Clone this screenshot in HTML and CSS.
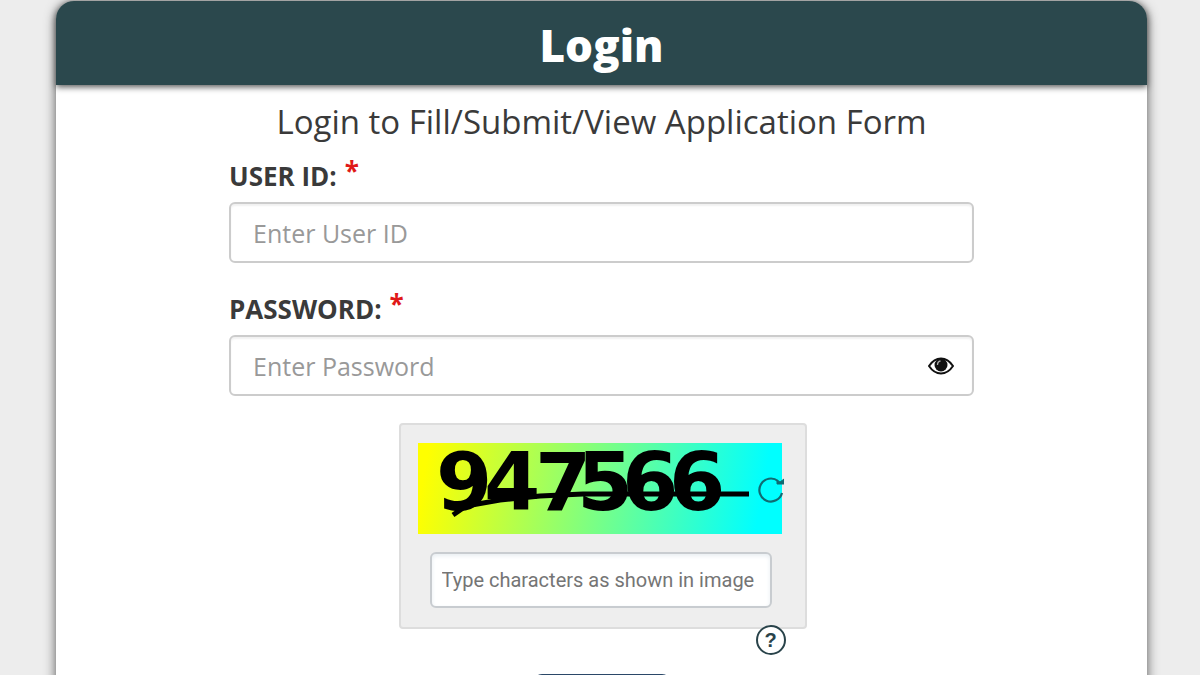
FILE: index.html
```html
<!DOCTYPE html>
<html lang="en">
<head>
<meta charset="utf-8">
<meta name="viewport" content="width=device-width, initial-scale=1">
<title>Login</title>
<link rel="stylesheet" href="styles.css">
</head>
<body>
<main class="card">
  <header class="card-header"><h1 class="title">Login</h1></header>
  <form class="form">
    <p class="subtitle">Login to Fill/Submit/View Application Form</p>
    <div class="field">
      <label class="label" for="user">USER ID: <span class="required">*</span></label>
      <input class="input" id="user" type="text" placeholder="Enter User ID">
    </div>
    <div class="field">
      <label class="label" for="password">PASSWORD: <span class="required">*</span></label>
      <div class="password">
        <input class="input" id="password" type="password" placeholder="Enter Password">
        <button class="icon-button eye" type="button" aria-label="Show password">
          <svg width="26" height="18" viewBox="0 0 26 18"><path d="M1 9Q6 1.500 13 1.500T25 9Q20 16.500 13 16.500T1 9Z" fill="#fff" stroke="#111" stroke-width="2"/><circle cx="13" cy="8" r="6.500" fill="#111"/><path d="M9.500 8Q9.500 4.500 12.500 4" fill="none" stroke="#aaa" stroke-width="1.300"/></svg>
        </button>
      </div>
    </div>
    <div class="captcha">
      <div class="captcha-image">
        <svg class="captcha-code" width="338" height="91" viewBox="0 0 338 91">
          <text class="digits" x="18 66 117 159 204 251" y="67">947566</text>
          <path d="M35 72L48 63L82 57L122 53L165 51H331" fill="none" stroke="#000" stroke-width="5"/>
        </svg>
        <button class="icon-button refresh" type="button" aria-label="Refresh image">
          <svg width="28" height="28" viewBox="0 0 28 28"><path d="M22 5A11.500 11.500 0 1 0 26 17" fill="none" stroke="#106b72" stroke-width="2.200"/><path d="M28 3V8H21V4L24 6Z" fill="#106b72" stroke="#106b72"/></svg>
        </button>
      </div>
      <input class="captcha-input" type="text" aria-label="Captcha" placeholder="Type characters as shown in image">
      <button class="icon-button help" type="button" aria-label="Help">?</button>
    </div>
    <button class="submit" type="submit" aria-label="Login"></button>
  </form>
</main>
</body>
</html>
```
FILE: styles.css
```css
* { box-sizing: border-box; }
html { scrollbar-width: none; }
body {
  margin: 0;
  padding: 1px 53px 0 56px;
  background: #ededed;
  color: #3a3a3a;
  font-family: "Open Sans", "Noto Sans", sans-serif;
}
.card {
  min-height: 100vh;
  background: #fff;
  border-radius: 18px;
  box-shadow: 0 2px 12px #555;
}
.card-header {
  padding: 14px 0 10px;
  border-radius: 18px 18px 0 0;
  background: #2b484d;
  box-shadow: 0 2px 6px #555;
  text-align: center;
}
.title {
  margin: 0;
  color: #fff;
  font-size: 44px;
  line-height: 60px;
  font-weight: 800;
}
.form {
  display: flex;
  flex-direction: column;
  align-items: center;
  width: 69%;
  max-width: 745px;
  margin: 0 auto;
  padding: 15px 0 24px;
}
.subtitle {
  margin: 0;
  font-size: 33px;
  line-height: 44px;
  text-align: center;
}
.field { width: 100%; margin-bottom: 14px; }
.label {
  display: flex;
  gap: 8px;
  padding-top: 14px;
  margin-bottom: 8px;
  font-size: 26px;
  line-height: 36px;
  font-weight: 700;
}
.required { color: #e01818; line-height: 26px; }
.input {
  display: block;
  width: 100%;
  height: 61px;
  padding: 0 22px;
  border: 2px solid #ccc;
  border-radius: 6px;
  background: #fff;
  box-shadow: inset 0 2px 2px #f1f1f1;
  font: 25px "Open Sans", sans-serif;
}
.input::placeholder { color: #999; }
.password { position: relative; }
.icon-button {
  display: flex;
  align-items: center;
  justify-content: center;
  padding: 0;
  border: 0;
  background: none;
}
.eye { position: absolute; right: 20px; top: 22px; }
.captcha {
  position: relative;
  width: 408px;
  margin: 13px 0 0 2px;
  padding: 18px 23px 19px 17px;
  border: 2px solid #ddd;
  border-radius: 4px;
  background: #eee;
}
.captcha-image {
  display: flex;
  align-items: center;
  height: 91px;
  margin-bottom: 18px;
  background: linear-gradient(100deg, #ff0 3%, #0ff 93%);
}
.captcha-code { flex: none; overflow: visible; }
.digits { font: bold 81px "DejaVu Sans", sans-serif; }
.refresh { flex: none; padding-top: 2px; }
.captcha-input {
  display: block;
  width: 342px;
  height: 56px;
  margin-left: 12px;
  padding: 0 10px;
  border: 2px solid #c8ccd0;
  border-radius: 6px;
  background: #fff;
  box-shadow: inset 0 2px 4px #e8eef2;
  font: 20px Roboto, sans-serif;
}
.captcha-input::placeholder { color: #757575; }
.help {
  position: absolute;
  right: 19px;
  bottom: -28px;
  width: 30px;
  height: 30px;
  border: 2px solid #29434a;
  border-radius: 50%;
  background: #fff;
  color: #29434a;
  font: bold 20px "Liberation Sans", sans-serif;
}
.submit {
  width: 136px;
  height: 56px;
  margin-top: 45px;
  border: 0;
  border-radius: 8px;
  background: #2b4868;
}
```
